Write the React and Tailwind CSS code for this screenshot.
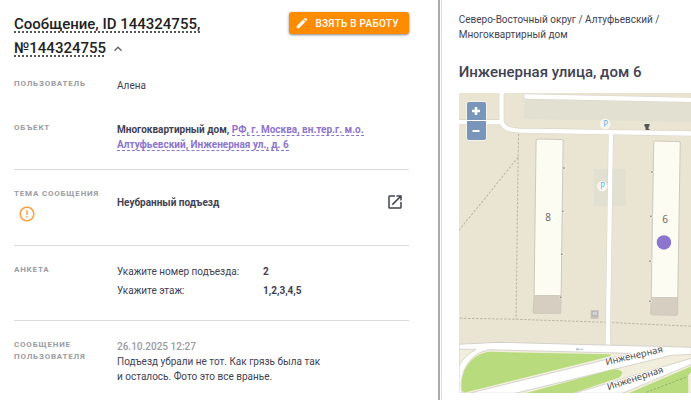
import { MdEdit, MdOpenInNew, MdErrorOutline, MdKeyboardArrowUp } from 'react-icons/md';

const answers = [
  { question: 'Укажите номер подъезда:', value: '2' },
  { question: 'Укажите этаж:', value: '1,2,3,4,5' },
];

const doors = [
  [105, 75],
  [104, 118],
  [103, 161],
  [102, 204],
  [193, 79],
  [192, 123],
  [191, 168],
  [191, 208],
];

const parkings = [
  [146, 31],
  [143, 93],
];

function Row({ label, badge, divider = false, children, className = '' }) {
  return (
    <div className={`flex ${divider ? 'border-t border-[#dcdcdc] pt-[17px]' : ''} ${className}`}>
      <div className="w-[103px] shrink-0 pt-px">
        <h2 className="text-[8px] leading-[12px] font-bold uppercase tracking-widest text-[#9a9ba3]">{label}</h2>
        {badge}
      </div>
      <div className="min-w-0 flex-1 pt-px">{children}</div>
    </div>
  );
}

function MapView() {
  return (
    <div className="relative mt-[9px] h-[300px] overflow-hidden bg-[#eae5d2]">
      <svg viewBox="0 0 232 300" preserveAspectRatio="xMinYMin slice" className="block h-full w-full" role="img" aria-label="Карта">
        <rect width="232" height="300" fill="#eae5d2" />

        {/* Parking areas */}
        <path d="M65 5V26L232 29V0H65Z" fill="#e1e0d1" />
        <path d="M65 0H232V5L67 2Z" fill="#e8e4d0" />
        <path d="M135 76H167V113H135Z" fill="#e1e0d1" />

        {/* Footpaths */}
        <g fill="none" stroke="#bab6a5" strokeWidth="1" strokeDasharray="2.5 1.5">
          <path d="M59.500 41L59 70L57 226" />
          <path d="M59 64L27 104L0 137" />
          <path d="M1 225L57 226L146 229L232 233" />
        </g>

        {/* Yard roads */}
        <g fill="none" strokeLinecap="round" strokeLinejoin="round">
          <g stroke="#d8d5cb" strokeWidth="5.400">
            <path d="M-4 29H42C46 36 50 37 60 37.500L236 40.500" />
            <path d="M42.500 -4V29" />
            <path d="M67 3.500L236 7" />
            <path d="M151.700 40L148.500 255" />
          </g>
          <g stroke="#fff" strokeWidth="4.300">
            <path d="M-4 29H42C46 36 50 37 60 37.500L236 40.500" />
            <path d="M42.500 -4V29" />
            <path d="M67 3.500L236 7" />
            <path d="M151.700 40L148.500 255" />
          </g>
        </g>

        {/* Buildings */}
        <g stroke="#cdc8bb" strokeWidth="1" strokeLinejoin="round">
          <path d="M75 202H102L101.500 219Q101.500 220 100 220H75.500Q74 220 74 219Z" fill="#d5cec1" />
          <path d="M77 48Q77 46 78.500 46L102 46.500Q104 46.500 104 48L102 202.500L75 202Z" fill="#fcfcf2" />
          <path d="M192 204H218.500V220Q218.500 222 217 222L193 221.500Q191.500 221.500 191.500 220Z" fill="#d5cec1" />
          <path d="M194.500 50Q194.500 48 196 48L219 48.500Q221 48.500 221 50L218.500 204.500L192 204Z" fill="#fcfcf2" />
        </g>
        {doors.map(([x, y]) => (
          <g key={`${x}-${y}`}>
            <circle cx={x} cy={y} r="1.600" fill="#f3f0e4" />
            <circle cx={x - 0.3} cy={y} r="1" fill="#9c978b" />
          </g>
        ))}
        <rect x="131.500" y="217" width="8" height="8.500" fill="#c4c0b8" />
        <rect x="133" y="218" width="5.500" height="4" fill="#d3d4da" stroke="#a9a8ac" strokeWidth=".6" />

        {/* Waste bin */}
        <path d="M185.500 31H190.500L190 33.500H189.500L189 37H186.500L186 33.500L185 33ZM189 35.500L191 37H188Z" fill="#555" />

        {/* Main street */}
        <path d="M0 251L40 249L232 254V300H0Z" fill="#fff" stroke="#d4d2cc" strokeWidth="1" />
        <path d="M0 256L17 256Q6 262 0 272Z" fill="#f2eedc" stroke="#c9c7c1" strokeWidth=".7" />
        <path d="M3 300C-1 283 9 258 32 256.500L172 260L10 300Z" fill="#f2eedc" stroke="#c9c7c1" strokeWidth=".7" />
        <path d="M3 297C0 280 12 259 32 258.500L149 261Q153 261 151 263L5 299.500Z" fill="#b8db7e" />
        <path d="M56 300L212 262L232 261V265L115 300Z" fill="#f2eedc" stroke="#c9c7c1" strokeWidth=".7" />
        <path d="M66 300L152 276.500Q161 275 163 279Q163 283 158 285L113 300Z" fill="#b8db7e" />
        <path d="M163 300L232 271V300Z" fill="#f2eedc" stroke="#c9c7c1" strokeWidth=".7" />
        <path d="M169 300L232 273V300Z" fill="#b8db7e" />
        <path d="M232 279Q227 282 229 286V300H232Z" fill="#f2eedc" />
        <path d="M187 299L229 283" stroke="#92ac69" strokeWidth=".9" strokeDasharray="2.5 1.5" />
        <path d="M117 256H124M117 256L119 255M117 256L119 257" stroke="#a9b1c8" strokeWidth=".8" fill="none" />

        {/* Street names and house numbers */}
        <g fontFamily="'Noto Sans', sans-serif" fill="#4c4c4c">
          <g fontSize="9.500" stroke="#fff" strokeWidth="1.500" paintOrder="stroke">
            <text x="147" y="272" transform="rotate(-13 147 272)">Инженерная</text>
            <text x="149" y="297" transform="rotate(-18 149 297)">Инженерная</text>
          </g>
          <g fontSize="10" textAnchor="middle" fill="#6c6c68">
            <text x="89" y="128">8</text>
            <text x="206" y="130">6</text>
          </g>
        </g>
        {parkings.map(([x, y]) => (
          <g key={`${x}-${y}`}>
            <circle cx={x} cy={y} r="5.200" fill="#f8f6ee" />
            <text x={x + 0.5} y={y + 3} fontSize="8" fontFamily="'Noto Sans', sans-serif" textAnchor="middle" fill="#62b2e8">P</text>
          </g>
        ))}

        <circle cx="204.700" cy="149.300" r="7.200" fill="#8c75cd" />
      </svg>

      {/* Zoom control */}
      <div className="absolute top-2 left-[7px] flex flex-col gap-px rounded-sm bg-white/50 p-px">
        <button type="button" aria-label="Приблизить" className="flex h-[18px] w-[19px] items-center justify-center rounded-t-xs bg-[#7996ba] text-white">
          <svg viewBox="0 0 10 10" className="size-2.5" stroke="currentColor" strokeWidth="2.500"><path d="M1 5H9M5 1V9" /></svg>
        </button>
        <button type="button" aria-label="Отдалить" className="flex h-[19px] w-[19px] items-center justify-center rounded-b-xs bg-[#7996ba] text-white">
          <svg viewBox="0 0 10 10" className="size-2.5" stroke="currentColor" strokeWidth="2"><path d="M1.500 5H8.500" /></svg>
        </button>
      </div>
    </div>
  );
}

export default function App() {
  return (
    <div className="grid min-h-screen grid-cols-[7fr_4fr] bg-white font-[Roboto,sans-serif] text-[10px] leading-[15px] text-[#3f4254]">
      {/* Message */}
      <main className="min-w-0 border-r-2 border-[#a9a9ae] pt-3 pr-[29px] pl-3.5">
        <header className="mb-4 flex items-start justify-between">
          <h1 className="w-[200px] text-[15px] leading-[24px] font-medium text-[#222]">
            <span className="underline decoration-[#555] decoration-dotted decoration-2 underline-offset-2 [text-decoration-skip-ink:none]">
              Сообщение, ID 144324755, №144324755
            </span>
            <button type="button" aria-label="Свернуть" className="ml-1 align-middle text-[#666]">
              <MdKeyboardArrowUp className="size-4" />
            </button>
          </h1>
          <button
            type="button"
            className="flex h-[22px] items-center gap-1.5 rounded-[3px] bg-[#fd8c00] pr-2.5 pl-1.5 text-[10px] font-medium tracking-wide text-white uppercase shadow-sm shadow-black/40"
          >
            <MdEdit className="size-3.5" />
            Взять в работу
          </button>
        </header>

        <Row label="Пользователь" className="pt-px pb-7">Алена</Row>

        <Row label="Объект" className="pb-[17px]">
          <p className="font-bold">
            Многоквартирный дом,{' '}
            <a href="#address" className="border-b border-dashed border-[#8c75cd] text-[#8c75cd]">
              РФ, г. Москва, вн.тер.г. м.о. Алтуфьевский, Инженерная ул., д. 6
            </a>
          </p>
        </Row>

        <Row
          label="Тема сообщения"
          badge={<MdErrorOutline className="mt-[5px] ml-1 size-[18px] text-[#ff9d3b]" />}
          divider
          className="pb-[22px]"
        >
          <div className="flex items-center justify-between pt-[5px] pr-[5px]">
            <p className="font-bold">Неубранный подъезд</p>
            <a href="#topic" aria-label="Открыть">
              <MdOpenInNew className="size-[18px]" />
            </a>
          </div>
        </Row>

        <Row label="Анкета" divider className="pb-[22px]">
          <dl className="space-y-1">
            {answers.map((a) => (
              <div key={a.question} className="flex">
                <dt className="w-[146px]">{a.question}</dt>
                <dd className="font-bold">{a.value}</dd>
              </div>
            ))}
          </dl>
        </Row>

        <Row label="Сообщение пользователя" divider>
          <time className="block font-medium text-[#9a9ba3]">26.10.2025 12:27</time>
          <p className="max-w-[210px]">Подъезд убрали не тот. Как грязь была так и осталось. Фото это все вранье.</p>
        </Row>
      </main>

      {/* Address */}
      <aside className="ml-px min-w-0 border-l border-[#dcdcdc] pt-3 pl-[17px]">
        <nav className="max-w-[210px]">
          <a href="#okrug">Северо-Восточный округ</a> / <a href="#district">Алтуфьевский</a> /{' '}
          <a href="#type">Многоквартирный дом</a>
        </nav>
        <h2 className="mt-[18px] text-[15px] leading-[24px] font-medium">Инженерная улица, дом 6</h2>
        <MapView />
      </aside>
    </div>
  );
}
